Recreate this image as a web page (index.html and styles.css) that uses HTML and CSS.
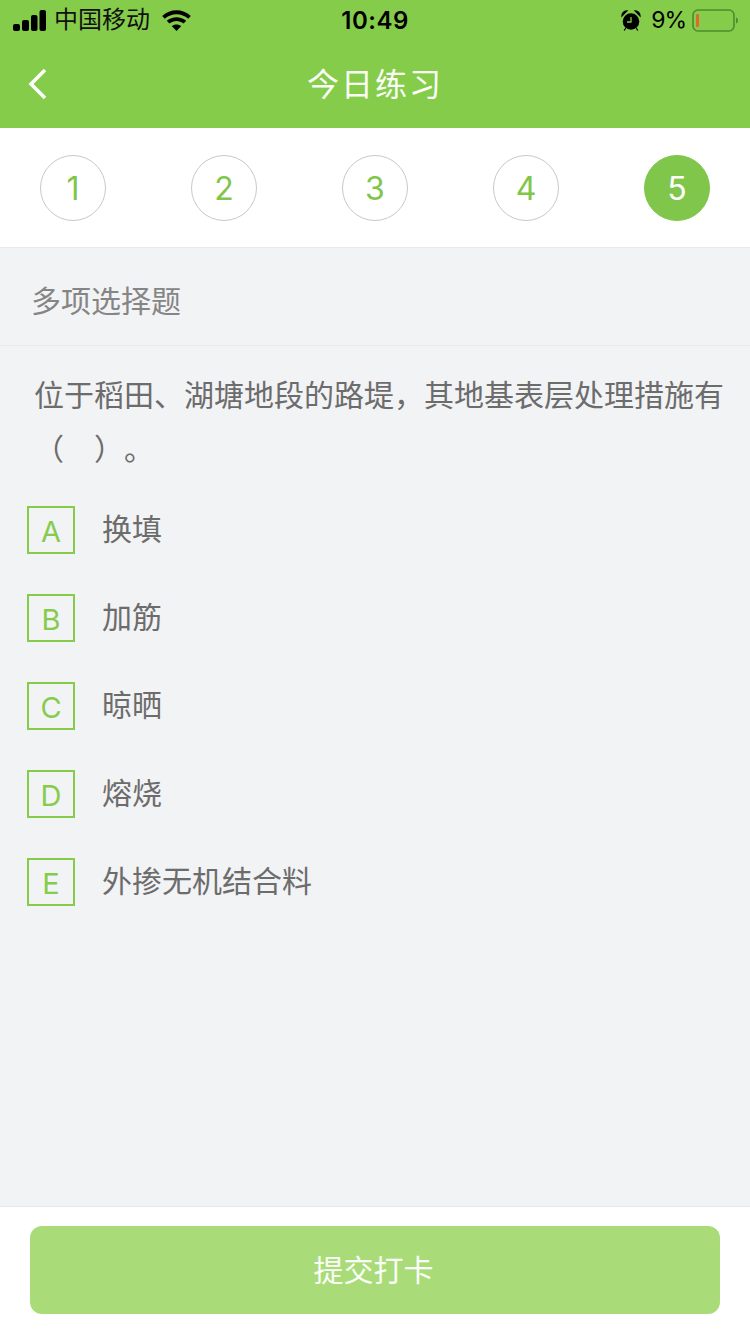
FILE: index.html
```html
<!DOCTYPE html>
<html lang="zh-CN">
<head>
<meta charset="utf-8">
<title>今日练习</title>
<link rel="stylesheet" href="styles.css">
</head>
<body>
<div class="page">
  <header class="header">
    <div class="status">
      <div class="status-left">
        <svg class="signal" width="33" height="21" viewBox="0 0 33 21"><rect x="0" y="14" width="7" height="7" rx="2"/><rect x="9" y="10" width="7" height="11" rx="2"/><rect x="18" y="5" width="6.500" height="16" rx="2"/><rect x="26.500" y="0" width="6.500" height="21" rx="2"/></svg>
        <span class="carrier">中国移动</span>
        <svg class="wifi" width="29" height="21" viewBox="0 0 30 22"><path d="M15 22l-5-5.200c2.800-2.300 7.200-2.300 10 0z"/><path d="M7.600 14.200l-2.800-2.900c5.700-5 14.700-5 20.400 0l-2.800 2.900c-4.200-3.500-10.600-3.500-14.800 0z"/><path d="M2.700 9.100L0 6.300c8.300-8 21.700-8 30 0l-2.700 2.800c-6.800-6.300-17.800-6.300-24.600 0z"/></svg>
      </div>
      <div class="time">10:49</div>
      <div class="status-right">
        <svg class="alarm" width="20" height="21" viewBox="0 0 20 21"><circle cx="10" cy="11.500" r="8.300"/><path d="M1 6C1 3 2.800 1 5.800 1zM19 6c0-3-1.800-5-4.800-5zM4.800 18l-1.600 2.500M15.200 18l1.600 2.500" stroke="#000" stroke-width="1.300"/><path d="M10 7v5H6" fill="none" stroke="#86cc4b" stroke-width="1.300"/></svg>
        <span class="percent">9%</span>
        <svg class="battery" width="47" height="23" viewBox="0 0 47 23"><rect x="2" y="1" width="41" height="21" rx="5" fill="none" stroke="#4f8a2c" stroke-width="1.600"/><rect x="5" y="5" width="3" height="13" rx="1" fill="#e2672c"/><path d="M45 8.500c1.500.5 2 1.500 2 3s-.5 2.500-2 3z" fill="#4f8a2c"/></svg>
      </div>
    </div>
    <div class="nav">
      <svg class="back" width="20" height="32" viewBox="0 0 20 32"><path d="M17 2L3 16l14 14" fill="none" stroke="#fff" stroke-width="3.500"/></svg>
      <h1 class="title">今日练习</h1>
    </div>
  </header>

  <nav class="steps">
    <span class="step">1</span>
    <span class="step">2</span>
    <span class="step">3</span>
    <span class="step">4</span>
    <span class="step step-active">5</span>
  </nav>

  <main class="content">
    <div class="qtype">多项选择题</div>
    <p class="question">位于稻田、湖塘地段的路堤，其地基表层处理措施有（　）&#8203;。</p>
    <ul class="options">
      <li class="option"><span class="letter">A</span><span class="option-text">换填</span></li>
      <li class="option"><span class="letter">B</span><span class="option-text">加筋</span></li>
      <li class="option"><span class="letter">C</span><span class="option-text">晾晒</span></li>
      <li class="option"><span class="letter">D</span><span class="option-text">熔烧</span></li>
      <li class="option"><span class="letter">E</span><span class="option-text">外掺无机结合料</span></li>
    </ul>
  </main>

  <footer class="footer">
    <button class="submit" type="button">提交打卡</button>
  </footer>
</div>
</body>
</html>
```
FILE: styles.css
```css
* { box-sizing: border-box; }
html, body { margin: 0; padding: 0; }
body {
  font-family: "Liberation Sans", "Noto Sans CJK SC", sans-serif;
  background: #f2f3f5;
}
.page {
  width: 750px;
  height: 1334px;
  display: flex;
  flex-direction: column;
  overflow: hidden;
}
.header {
  height: 128px;
  background: #86cc4b;
  flex: none;
}
.status {
  height: 40px;
  display: grid;
  grid-template-columns: 1fr auto 1fr;
  align-items: center;
  padding: 0 12px 0 13px;
  color: #000;
}
.status-left { display: flex; align-items: center; }
.signal { margin-right: 9px; }
.carrier { font-size: 24px; line-height: 28px; color: #111; margin-left: -1px; }
.wifi { margin-left: 12px; }
.time {
  font-family: Inter, "Liberation Sans", sans-serif;
  font-size: 24px;
  font-weight: 600;
  letter-spacing: 0.5px;
  margin-left: -1px;
}
.status-right { display: flex; align-items: center; justify-content: flex-end; }
.percent {
  font-family: Inter, "Liberation Sans", sans-serif;
  font-size: 23px;
  letter-spacing: -1px;
  margin: 0 5px 0 10px;
}
.nav {
  height: 88px;
  display: flex;
  align-items: center;
  justify-content: center;
  position: relative;
}
.back { position: absolute; left: 28px; top: 28px; }
.title {
  margin: 0 0 4px;
  font-size: 32px;
  font-weight: 400;
  color: #fbfef8;
  letter-spacing: 2px;
}
.steps {
  height: 120px;
  flex: none;
  background: #fff;
  border-bottom: 1px solid #e8e9eb;
  display: flex;
  justify-content: space-between;
  align-items: flex-start;
  padding: 27px 40px 0;
}
.step {
  width: 66px;
  height: 66px;
  border-radius: 50%;
  border: 1px solid #c9c9c9;
  display: flex;
  align-items: center;
  justify-content: center;
  font-family: Inter, "Liberation Sans", sans-serif;
  font-size: 32px;
  font-weight: 400;
  color: #7fc64a;
}
.step-active {
  background: #7fc64a;
  border-color: #7fc64a;
  color: #fff;
}
.content { flex: 1; min-height: 0; }
.qtype {
  height: 98px;
  border-bottom: 1px solid #e9eaec;
  padding: 4px 31px 0;
  display: flex;
  align-items: center;
  font-size: 30px;
  color: #858585;
}
.question {
  margin: 0;
  padding: 23px 20px 0 34px;
  font-size: 30px;
  line-height: 54px;
  color: #6c6c6c;
}
.options {
  list-style: none;
  margin: 0;
  padding: 29px 0 0 27px;
  display: flex;
  flex-direction: column;
  gap: 40px;
}
.option {
  display: flex;
  align-items: center;
  height: 48px;
}
.letter {
  width: 48px;
  height: 48px;
  border: 2px solid #86cc4b;
  padding-top: 2px;
  display: flex;
  align-items: center;
  justify-content: center;
  font-family: Inter, "Liberation Sans", sans-serif;
  font-size: 29px;
  font-weight: 400;
  color: #86cc4b;
}
.option-text {
  margin: 0 0 6px 27px;
  font-size: 30px;
  color: #6c6c6c;
}
.footer {
  height: 128px;
  flex: none;
  background: #fff;
  border-top: 1px solid #e6e7e9;
  padding: 19px 30px 0;
}
.submit {
  display: block;
  width: 100%;
  height: 88px;
  border: 0;
  border-radius: 12px;
  padding: 0 3px 4px 0;
  background: #a9dc78;
  color: #fbfef8;
  font-family: inherit;
  font-size: 30px;
}
```
